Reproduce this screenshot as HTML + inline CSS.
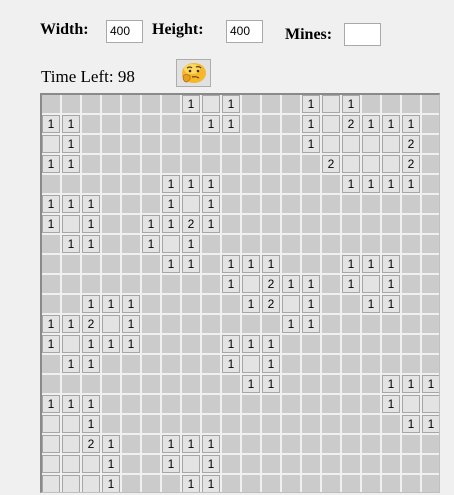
<!DOCTYPE html>
<html><head><meta charset="utf-8"><style>
body{margin:0;background:#f0f0f0;width:454px;height:495px;overflow:hidden;position:relative;font-family:"Liberation Serif",serif}
.lbl{position:absolute;font-weight:bold;font-size:16px;color:#000;line-height:1}
.inp{position:absolute;width:35px;height:21px;border:1px solid #a9a9a9;background:#fff;font:12px "Liberation Sans",sans-serif;line-height:21px;padding-left:3px;box-sizing:border-box;width:37px;height:23px}
#time{position:absolute;left:41px;top:68px;font-size:17px;line-height:1}
#btn{position:absolute;left:176px;top:59px;width:35px;height:28px;box-sizing:border-box;border:1px solid #adadad;background:#e1e1e1}
#grid{position:absolute;left:40px;top:93px;width:400px;height:400px;box-sizing:border-box;border-left:2px solid #8a8a8a;border-top:2px solid #8a8a8a;border-right:1px solid #c0c0c0;border-bottom:1px solid #c0c0c0;background:#f0f0f0;overflow:hidden}
.r{display:flex;height:18px;margin-bottom:2px}
.r i,.r b{display:block;width:18px;height:18px;margin-right:2px;box-sizing:border-box;flex:none}
.r i{background:#cbcbcb}
.r b{background:#e3e3e3;border:1px solid #a6a6a6;font:normal 12px "Liberation Sans",sans-serif;text-align:center;line-height:16px;color:#000}
</style></head><body>
<div class="lbl" style="left:40px;top:22px">Width:</div>
<div class="inp" style="left:106px;top:20px">400</div>
<div class="lbl" style="left:152px;top:22px">Height:</div>
<div class="inp" style="left:226px;top:20px">400</div>
<div class="lbl" style="left:285px;top:27px">Mines:</div>
<div class="inp" style="left:344px;top:23px"></div>
<div id="time">Time Left: 98</div>
<div id="btn"><svg width="33" height="26" viewBox="0 0 33 26">
<ellipse cx="17" cy="13" rx="12" ry="10" fill="#f5b82a"/>
<ellipse cx="15" cy="9" rx="8" ry="5" fill="#fbd860"/>
<path d="M10 8 q3 -2 5 0 M19 7 q3 -1 5 1" stroke="#5a3a10" stroke-width="1.2" fill="none"/>
<circle cx="13" cy="11" r="1.3" fill="#4a2a08"/><circle cx="21" cy="11" r="1.3" fill="#4a2a08"/>
<path d="M15 17 q4 -1 7 1" stroke="#6a3a10" stroke-width="1.2" fill="none"/>
<path d="M6 16 q3 -3 7 0 q1 4 -3 6 q-4 0 -4 -6z" fill="#e8a020" stroke="#b87010" stroke-width="0.8"/>
</svg></div>
<div id="grid">
<div class="r"><i></i><i></i><i></i><i></i><i></i><i></i><i></i><b>1</b><b></b><b>1</b><i></i><i></i><i></i><b>1</b><b></b><b>1</b><i></i><i></i><i></i><i></i></div>
<div class="r"><b>1</b><b>1</b><i></i><i></i><i></i><i></i><i></i><i></i><b>1</b><b>1</b><i></i><i></i><i></i><b>1</b><b></b><b>2</b><b>1</b><b>1</b><b>1</b><i></i></div>
<div class="r"><b></b><b>1</b><i></i><i></i><i></i><i></i><i></i><i></i><i></i><i></i><i></i><i></i><i></i><b>1</b><b></b><b></b><b></b><b></b><b>2</b><i></i></div>
<div class="r"><b>1</b><b>1</b><i></i><i></i><i></i><i></i><i></i><i></i><i></i><i></i><i></i><i></i><i></i><i></i><b>2</b><b></b><b></b><b></b><b>2</b><i></i></div>
<div class="r"><i></i><i></i><i></i><i></i><i></i><i></i><b>1</b><b>1</b><b>1</b><i></i><i></i><i></i><i></i><i></i><i></i><b>1</b><b>1</b><b>1</b><b>1</b><i></i></div>
<div class="r"><b>1</b><b>1</b><b>1</b><i></i><i></i><i></i><b>1</b><b></b><b>1</b><i></i><i></i><i></i><i></i><i></i><i></i><i></i><i></i><i></i><i></i><i></i></div>
<div class="r"><b>1</b><b></b><b>1</b><i></i><i></i><b>1</b><b>1</b><b>2</b><b>1</b><i></i><i></i><i></i><i></i><i></i><i></i><i></i><i></i><i></i><i></i><i></i></div>
<div class="r"><i></i><b>1</b><b>1</b><i></i><i></i><b>1</b><b></b><b>1</b><i></i><i></i><i></i><i></i><i></i><i></i><i></i><i></i><i></i><i></i><i></i><i></i></div>
<div class="r"><i></i><i></i><i></i><i></i><i></i><i></i><b>1</b><b>1</b><i></i><b>1</b><b>1</b><b>1</b><i></i><i></i><i></i><b>1</b><b>1</b><b>1</b><i></i><i></i></div>
<div class="r"><i></i><i></i><i></i><i></i><i></i><i></i><i></i><i></i><i></i><b>1</b><b></b><b>2</b><b>1</b><b>1</b><i></i><b>1</b><b></b><b>1</b><i></i><i></i></div>
<div class="r"><i></i><i></i><b>1</b><b>1</b><b>1</b><i></i><i></i><i></i><i></i><i></i><b>1</b><b>2</b><b></b><b>1</b><i></i><i></i><b>1</b><b>1</b><i></i><i></i></div>
<div class="r"><b>1</b><b>1</b><b>2</b><b></b><b>1</b><i></i><i></i><i></i><i></i><i></i><i></i><i></i><b>1</b><b>1</b><i></i><i></i><i></i><i></i><i></i><i></i></div>
<div class="r"><b>1</b><b></b><b>1</b><b>1</b><b>1</b><i></i><i></i><i></i><i></i><b>1</b><b>1</b><b>1</b><i></i><i></i><i></i><i></i><i></i><i></i><i></i><i></i></div>
<div class="r"><i></i><b>1</b><b>1</b><i></i><i></i><i></i><i></i><i></i><i></i><b>1</b><b></b><b>1</b><i></i><i></i><i></i><i></i><i></i><i></i><i></i><i></i></div>
<div class="r"><i></i><i></i><i></i><i></i><i></i><i></i><i></i><i></i><i></i><i></i><b>1</b><b>1</b><i></i><i></i><i></i><i></i><i></i><b>1</b><b>1</b><b>1</b></div>
<div class="r"><b>1</b><b>1</b><b>1</b><i></i><i></i><i></i><i></i><i></i><i></i><i></i><i></i><i></i><i></i><i></i><i></i><i></i><i></i><b>1</b><b></b><b></b></div>
<div class="r"><b></b><b></b><b>1</b><i></i><i></i><i></i><i></i><i></i><i></i><i></i><i></i><i></i><i></i><i></i><i></i><i></i><i></i><i></i><b>1</b><b>1</b></div>
<div class="r"><b></b><b></b><b>2</b><b>1</b><i></i><i></i><b>1</b><b>1</b><b>1</b><i></i><i></i><i></i><i></i><i></i><i></i><i></i><i></i><i></i><i></i><i></i></div>
<div class="r"><b></b><b></b><b></b><b>1</b><i></i><i></i><b>1</b><b></b><b>1</b><i></i><i></i><i></i><i></i><i></i><i></i><i></i><i></i><i></i><i></i><i></i></div>
<div class="r"><b></b><b></b><b></b><b>1</b><i></i><i></i><i></i><b>1</b><b>1</b><i></i><i></i><i></i><i></i><i></i><i></i><i></i><i></i><i></i><i></i><i></i></div>
</div>
</body></html>
